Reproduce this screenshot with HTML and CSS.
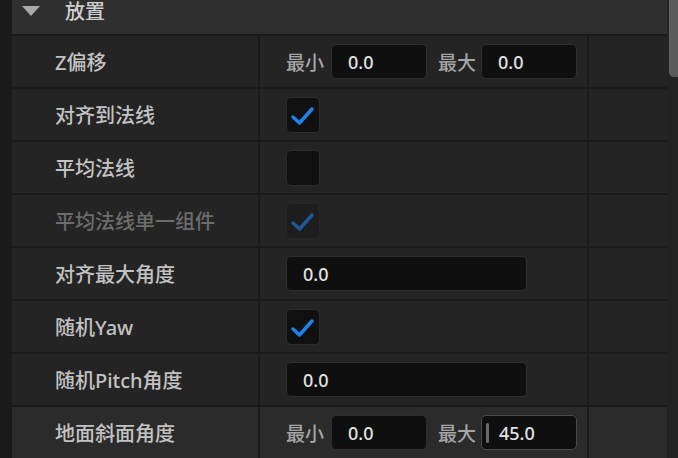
FILE: index.html
```html
<!DOCTYPE html>
<html>
  <head>
    <meta charset="UTF-8" />
    <title>放置</title>
    <link rel="stylesheet" href="styles.css">
  </head>
  <body>
    <div class="frame">
      <div class="gutter"></div>

      <div class="panel">
        <!-- category header -->
        <div class="header">
          <span class="arrow"></span>
          <span class="title">放置</span>
        </div>

        <div class="row">
          <div class="name">Z偏移</div>
          <div class="value">
            <span class="tag">最小</span>
            <div class="field short">0.0</div>
            <span class="tag gap">最大</span>
            <div class="field short">0.0</div>
          </div>
          <div class="extra"></div>
        </div>

        <div class="row">
          <div class="name">对齐到法线</div>
          <div class="value">
            <div class="check">
              <svg width="34" height="36" viewBox="0 0 34 36"><path d="M7 20 L13.5 26 L26 12" /></svg>
            </div>
          </div>
          <div class="extra"></div>
        </div>

        <div class="row">
          <div class="name">平均法线</div>
          <div class="value">
            <div class="check"></div>
          </div>
          <div class="extra"></div>
        </div>

        <div class="row">
          <div class="name disabled">平均法线单一组件</div>
          <div class="value">
            <div class="check off">
              <svg width="34" height="36" viewBox="0 0 34 36"><path d="M7 20 L13.5 26 L26 12" /></svg>
            </div>
          </div>
          <div class="extra"></div>
        </div>

        <div class="row">
          <div class="name">对齐最大角度</div>
          <div class="value">
            <div class="field wide">0.0</div>
          </div>
          <div class="extra"></div>
        </div>

        <div class="row">
          <div class="name">随机Yaw</div>
          <div class="value">
            <div class="check">
              <svg width="34" height="36" viewBox="0 0 34 36"><path d="M7 20 L13.5 26 L26 12" /></svg>
            </div>
          </div>
          <div class="extra"></div>
        </div>

        <div class="row">
          <div class="name">随机Pitch角度</div>
          <div class="value">
            <div class="field wide">0.0</div>
          </div>
          <div class="extra"></div>
        </div>

        <div class="row hover">
          <div class="name">地面斜面角度</div>
          <div class="value">
            <span class="tag">最小</span>
            <div class="field short">0.0</div>
            <span class="tag gap">最大</span>
            <div class="field short focus"><span class="caret"></span>45.0</div>
          </div>
          <div class="extra"></div>
        </div>
      </div>

      <div class="track">
        <div class="thumb"></div>
      </div>
    </div>
  </body>
</html>
```

FILE: styles.css
```css
body {
  margin: 0;
  background: #1b1b1b;
  font-family: "Noto Sans", "Noto Sans CJK SC", sans-serif;
  font-size: 19px;
  font-weight: 500;
  color: #c2c2c2;
  overflow: hidden;
}
.frame {
  display: flex;
  height: 458px;
}
.gutter {
  width: 12px;
  background: #1a1a1a;
}
.panel {
  width: 655px;
  background: #1a1a1a;
}
.track {
  width: 11px;
  background: #222222;
  display: flex;
  justify-content: flex-end;
}
.thumb {
  width: 8px;
  height: 77px;
  background: #5a5a5a;
  border-radius: 0 0 0 5px;
  border-left: 1px solid #666;
}

/* header */
.header {
  height: 34px;
  background: #2f2f2f;
  border-bottom: 2px solid #1a1a1a;
  display: flex;
  align-items: flex-start;
}
.arrow {
  width: 0;
  height: 0;
  margin: 6px 0 0 10px;
  border-left: 9px solid transparent;
  border-right: 9px solid transparent;
  border-top: 10px solid #a9a9a9;
}
.title {
  margin: 1px 0 0 25px;
  font-size: 20px;
  line-height: 22px;
  color: #d0d0d0;
}

/* rows */
.row {
  display: flex;
  height: 51px;
  border-bottom: 2px solid #1a1a1a;
  background: #242424;
}
.row.hover {
  background: #2b2b2b;
}
.name {
  width: 248px;
  box-sizing: border-box;
  padding-left: 43px;
  font-size: 20px;
  display: flex;
  align-items: center;
  border-right: 2px solid #1a1a1a;
}
.name.disabled {
  color: #6c6c6c;
}
.value {
  width: 329px;
  box-sizing: border-box;
  padding-left: 26px;
  display: flex;
  align-items: center;
  border-right: 2px solid #1a1a1a;
}
.extra {
  flex: 1;
}
.tag {
  color: #a6a6a6;
  margin-right: 7px;
}
.tag.gap {
  margin-left: 11px;
  margin-right: 5px;
}

/* inputs */
.field {
  height: 35px;
  box-sizing: border-box;
  background: #0f0f0f;
  border: 1px solid #2e2e2e;
  border-radius: 5px;
  display: flex;
  align-items: center;
  padding-left: 16px;
  font-size: 18px;
  color: #e2e2e2;
}
.field.short {
  width: 96px;
}
.field.wide {
  width: 241px;
}
.field.focus {
  border-color: #4a4a4a;
  padding-left: 4px;
}
.caret {
  width: 3px;
  height: 20px;
  background: #6a6a6a;
  border-radius: 2px;
  margin-right: 10px;
}

/* checkboxes */
.check {
  width: 34px;
  height: 36px;
  box-sizing: border-box;
  background: #101010;
  border: 1px solid #2c2c2c;
  border-radius: 5px;
  position: relative;
}
.check svg {
  position: absolute;
  left: -1px;
  top: -1px;
}
.check path {
  fill: none;
  stroke: #1c82ec;
  stroke-width: 3.5;
  stroke-linecap: round;
  stroke-linejoin: round;
}
.check.off {
  background: #1d1d1d;
  border-color: #262626;
}
.check.off path {
  stroke: #1d5a95;
}
```
